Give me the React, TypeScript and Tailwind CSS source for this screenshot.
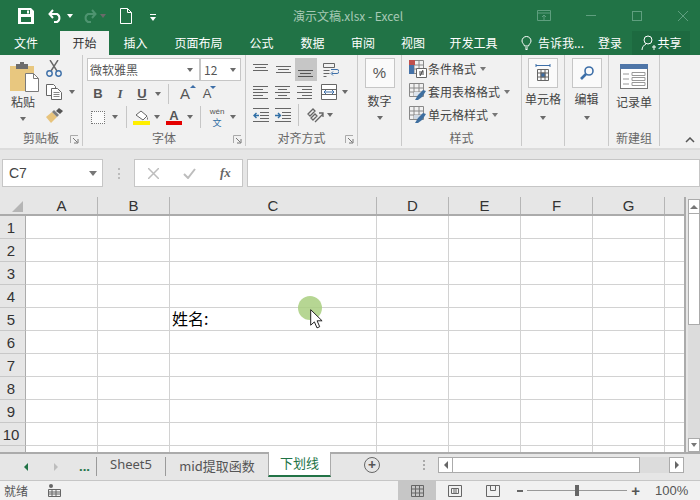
const CJK = "font-['Noto_Sans_CJK_SC','Noto_Sans',sans-serif]";

function Caret({ className = "" }: { className?: string }) {
  return <span className={`inline-block w-0 h-0 border-x-[3.5px] border-x-transparent border-t-[4px] border-t-[#6a6a6a] ${className}`} />;
}

function VSep({ className = "" }: { className?: string }) {
  return <span className={`w-px bg-[#c6c6c6] self-stretch ${className}`} />;
}

function Launcher() {
  return (
    <svg width="9" height="9" viewBox="0 0 9 9" fill="none" stroke="#777">
      <path d="M.5 8V.5H8" stroke="#aaa" />
      <path d="M3 3l4.5 4.5M8 4v4H4" />
    </svg>
  );
}

function Lines({ rows, active = false }: { rows: number[][]; active?: boolean }) {
  // rows are [x1, x2, y] in a 16x16 box
  return (
    <svg width="16" height="16" viewBox="0 0 16 16" stroke={active ? "#555" : "#666"} strokeWidth="1">
      {rows.map((r, i) => (
        <path key={i} d={`M${r[0]} ${r[2] + 0.5}H${r[1]}`} />
      ))}
    </svg>
  );
}

const alignTop = [[0, 15, 2], [2, 13, 5], [0, 15, 8]];
const alignMid = [[0, 15, 4], [2, 13, 7], [0, 15, 10]];
const alignBot = [[0, 15, 8], [2, 13, 11], [0, 15, 14]];
const alignL = [[0, 15, 2], [0, 10, 5], [0, 15, 8], [0, 10, 11], [0, 15, 14]];
const alignC = [[0, 15, 2], [3, 12, 5], [0, 15, 8], [3, 12, 11], [0, 15, 14]];
const alignR = [[0, 15, 2], [5, 15, 5], [0, 15, 8], [5, 15, 11], [0, 15, 14]];

function Clipboard() {
  return (
    <svg width="29" height="30" viewBox="0 0 29 30">
      <rect x="0" y="4" width="24" height="25" fill="#e8c77f" />
      <rect x="6" y="2" width="12" height="5" fill="#6d6d6d" />
      <rect x="10" y="0" width="4" height="3" fill="#6d6d6d" />
      <path d="M15.5 11.5h8l5 5v13h-13z" fill="#fff" stroke="#7a7a7a" />
      <path d="M23.5 11.5v5h5" fill="none" stroke="#7a7a7a" />
    </svg>
  );
}

function Scissors() {
  return (
    <svg width="16" height="17" viewBox="0 0 16 17" fill="none">
      <path d="M4 0l7 11M12 0L5 11" stroke="#666" strokeWidth="1.4" />
      <circle cx="3.5" cy="13.5" r="2.7" stroke="#3d6fa8" strokeWidth="1.4" />
      <circle cx="12.5" cy="13.5" r="2.7" stroke="#3d6fa8" strokeWidth="1.4" />
    </svg>
  );
}

function CopyIcon() {
  return (
    <svg width="16" height="16" viewBox="0 0 16 16" fill="#fff" stroke="#666">
      <path d="M.5.5h7l2 2v9h-9z" />
      <path d="M5.5 4.5h6l4 4v7h-10z" />
      <path d="M7.5 8.5h6M7.5 10.5h6M7.5 12.5h6" stroke="#888" />
    </svg>
  );
}

function Brush() {
  return (
    <svg width="17" height="15" viewBox="0 0 17 15">
      <path d="M0 9l6-5 5 5-6 6z" fill="#e7c37c" />
      <path d="M6 4l5 5 2-2-5-5z" fill="#7f7f7f" />
      <path d="M10 3l3-3 4 3-3 3z" fill="#555" />
    </svg>
  );
}

function Group({ width, label, launcher, children, className = "" }: { width: number; label?: string; launcher?: boolean; children: React.ReactNode; className?: string }) {
  return (
    <div className="flex flex-col shrink-0 border-r border-[#c9c9c9] h-[91px]" style={{ width }}>
      <div className={`h-[75px] shrink-0 ${className}`}>{children}</div>
      <div className="h-[16px] flex items-center relative text-[12px] text-[#666]">
        <span className="flex-1 text-center leading-none">{label}</span>
        {launcher && (
          <span className="absolute right-[3px] top-[5px] flex">
            <Launcher />
          </span>
        )}
      </div>
    </div>
  );
}

function StyleRow({ icon, label }: { icon: React.ReactNode; label: string }) {
  return (
    <div className="h-[23px] flex items-center gap-[1px] text-[12px] text-[#444]">
      <span className="w-[18px] flex justify-center">{icon}</span>
      <span className="leading-none">{label}</span>
      <Caret className="ml-[3px] border-t-[#777]" />
    </div>
  );
}

function TableIcon({ kind }: { kind: "cond" | "table" | "cell" }) {
  return (
    <svg width="18" height="18" viewBox="0 0 18 18" fill="none">
      <path d="M.5.5h14v13H.5zM.5 5h14M.5 9h14M5 .5v13M10 .5v13" stroke="#888" />
      {kind === "cond" && <rect x="0" y="0" width="6" height="5" fill="#c0504d" />}
      {kind === "cond" && <rect x="0" y="5" width="5" height="9" fill="#4472a8" />}
      {kind === "cond" && <path d="M7.5 8.5h10v9h-10z" fill="#fff" stroke="#666" />}
      {kind === "cond" && <path d="M10 12h5M10 14h5M14 10l-3 6" stroke="#444" />}
      {kind !== "cond" && <path d="M5 9h9v4H5z" fill={kind === "cell" ? "#cfd8e2" : "#dde4ec"} />}
      {kind !== "cond" && <path d="M6 17l3-5 5-5 3 1-4 6-4 3z" fill="#3f6f9f" />}
    </svg>
  );
}

function BoxBtn({ children }: { children: React.ReactNode }) {
  return <div className="w-[30px] h-[30px] bg-[#fafafa] border border-[#c6c6c6] flex items-center justify-center mx-auto">{children}</div>;
}

function Ribbon() {
  return (
    <div className="h-[95px] bg-[#f1f1f1] flex border-b-2 border-[#dcdcdc] text-[#444]">
      <Group width={83} label="剪贴板" launcher className="flex">
        <div className="w-[46px] pt-[7px] flex flex-col items-center">
          <div className="ml-[3px]"><Clipboard /></div>
          <span className="text-[12px] leading-none mt-[4px]">粘贴</span>
          <Caret className="mt-[9px]" />
        </div>
        <div className="pt-[5px] flex flex-col">
          <Scissors />
          <div className="flex items-center gap-[7px] mt-[7px]"><CopyIcon /><Caret /></div>
          <div className="mt-[8px]"><Brush /></div>
        </div>
      </Group>
      <Group width={163} label="字体" launcher className="pl-[4px] pt-[3px]">
        <div className="flex h-[23px] w-[154px] bg-white border border-[#c6c6c6] text-[12px] text-[#555]">
          <div className="w-[113px] border-r-2 border-[#c6c6c6] flex items-center justify-between pl-[2px] pr-[6px]">
            <span>微软雅黑</span><Caret />
          </div>
          <div className="flex-1 flex items-center justify-between pl-[3px] pr-[4px]">
            <span>12</span><Caret />
          </div>
        </div>
        <div className="flex items-center h-[20px] mt-[3px] text-[#555]">
          <span className="w-[22px] text-center text-[13px] font-bold font-['Liberation_Sans']">B</span>
          <span className="w-[22px] text-center text-[13px] italic font-bold font-['Liberation_Serif']">I</span>
          <span className="w-[22px] text-center text-[13px] font-bold underline font-['Liberation_Sans']">U</span>
          <Caret className="ml-[2px]" />
          <VSep className="ml-[7px]" />
          <span className="w-[24px] ml-[4px] text-center text-[15px] font-['Liberation_Sans'] relative">A<span className="absolute right-[1px] top-[2px] w-0 h-0 border-x-[3px] border-x-transparent border-b-[3px] border-b-[#3d6fa8]" /></span>
          <span className="w-[20px] text-center text-[13px] font-['Liberation_Sans'] relative">A<span className="absolute right-[1px] top-[2px] w-0 h-0 border-x-[3px] border-x-transparent border-t-[3px] border-t-[#3d6fa8]" /></span>
        </div>
        <div className="flex items-center h-[22px] mt-[2px]">
          <span className="ml-[4px] w-[14px] h-[13px] border border-dotted border-[#777] bg-[#fafafa]" />
          <Caret className="ml-[7px]" />
          <VSep className="ml-[8px]" />
          <div className="ml-[6px] w-[17px] flex flex-col items-center">
            <svg width="14" height="11" viewBox="0 0 14 11"><path d="M1 5l5-4 6 5-4 4z" fill="#fff" stroke="#666" /><path d="M12 6l1 3-1 1z" fill="#666" /></svg>
            <span className="w-[17px] h-[4px] bg-[#ffef00]" />
          </div>
          <Caret className="ml-[4px]" />
          <div className="ml-[6px] w-[16px] flex flex-col items-center">
            <span className="text-[13px] leading-[11px] font-bold font-['Liberation_Sans'] text-[#555]">A</span>
            <span className="w-[16px] h-[4px] bg-[#e40000]" />
          </div>
          <Caret className="ml-[5px]" />
          <VSep className="ml-[7px]" />
          <div className="ml-[8px] w-[16px] flex flex-col items-center gap-[2px]">
            <span className="text-[8px] leading-[8px] font-['Liberation_Sans'] text-[#555]">wén</span>
            <span className="text-[9px] leading-[9px] text-[#2f6ea5]">文</span>
          </div>
          <Caret className="ml-[5px]" />
        </div>
      </Group>
      <Group width={112} label="对齐方式" launcher className="pl-[7px]">
        <div className="flex items-center h-[23px] mt-[3px]">
          <span className="w-[22px] flex"><Lines rows={alignTop} /></span>
          <span className="w-[19px] flex ml-[1px]"><Lines rows={alignMid} /></span>
          <span className="w-[22px] h-[23px] bg-[#c6c6c6] flex items-center justify-center"><Lines rows={alignBot} active /></span>
          <span className="ml-[6px] flex">
            <svg width="16" height="16" viewBox="0 0 16 16" fill="none" stroke="#666"><path d="M.5 1.5h11v4H.5zM.5 8.5h6M.5 11.5h6M.5 14.5h3" /><path d="M9 11.5h5a1.5 1.5 0 000-4H8M10 9.5l-2 2 2 2" stroke="#3d6fa8" /></svg>
          </span>
        </div>
        <div className="flex items-center h-[20px] mt-[1px]">
          <span className="w-[22px] flex"><Lines rows={alignL} /></span>
          <span className="w-[22px] flex"><Lines rows={alignC} /></span>
          <span className="w-[24px] flex"><Lines rows={alignR} /></span>
          <span className="flex">
            <svg width="16" height="16" viewBox="0 0 16 16" fill="#fff" stroke="#666"><path d="M.5.5h15v15H.5zM.5 5.500h15M.5 10.500h15" /><path d="M3 8h10M5 6l-2 2 2 2M11 6l2 2-2 2" stroke="#3d6fa8" fill="none" /></svg>
          </span>
          <Caret className="ml-[5px]" />
        </div>
        <div className="flex items-center h-[22px] mt-[2px]">
          <span className="w-[22px] flex">
            <svg width="16" height="16" viewBox="0 0 16 16" fill="none" stroke="#666"><path d="M0 1.5h16M7 5.500h9M7 8.500h9M7 11.500h9M0 14.500h16" /><path d="M6 8.500H1M3.500 6l-2.500 2.500L3.500 11" stroke="#2f6ea5" strokeWidth="1.4" /></svg>
          </span>
          <span className="w-[22px] flex">
            <svg width="16" height="16" viewBox="0 0 16 16" fill="none" stroke="#666"><path d="M0 1.5h16M7 5.500h9M7 8.500h9M7 11.500h9M0 14.500h16" /><path d="M0 8.500h5M3 6l2.500 2.500L3 11" stroke="#2f6ea5" strokeWidth="1.4" /></svg>
          </span>
          <VSep className="ml-[1px]" />
          <span className="ml-[8px] text-[#555] flex">
            <svg width="17" height="17" viewBox="0 0 17 17" fill="none" stroke="#666" strokeWidth="1.3"><path d="M1 7l5-5 2 2-5 5zM4 11l4-4 2 2-4 4zM8 15l8-8M12 6h4v4" /></svg>
          </span>
          <Caret className="ml-[3px]" />
        </div>
      </Group>
      <Group width={44} className="pt-[3px] flex flex-col items-center">
        <BoxBtn><span className="text-[15px] font-['Liberation_Sans'] text-[#555]">%</span></BoxBtn>
        <span className="text-[12px] leading-none mt-[7px]">数字</span>
        <Caret className="mt-[9px]" />
      </Group>
      <Group width={120} label="样式" className="pl-[7px] pt-[2px]">
        <StyleRow icon={<TableIcon kind="cond" />} label="条件格式" />
        <StyleRow icon={<TableIcon kind="table" />} label="套用表格格式" />
        <StyleRow icon={<TableIcon kind="cell" />} label="单元格样式" />
      </Group>
      <Group width={43} className="pt-[3px] flex flex-col items-center">
        <BoxBtn>
          <svg width="16" height="18" viewBox="0 0 16 18" fill="none" stroke="#666"><path d="M1 1.500h14M1 0v3M15 0v3" stroke="#3d6fa8" /><path d="M2.500 5.500h11v11h-11zM2.500 9h11M2.500 13h11M6 5.500v11M10 5.500v11" /><rect x="6" y="9" width="4" height="4" fill="#3d6fa8" /></svg>
        </BoxBtn>
        <span className="text-[12px] leading-none mt-[5px] whitespace-nowrap">单元格</span>
        <Caret className="mt-[11px]" />
      </Group>
      <Group width={44} className="pt-[3px] flex flex-col items-center">
        <BoxBtn>
          <svg width="16" height="16" viewBox="0 0 16 16" fill="none" stroke="#3d6fa8"><circle cx="10" cy="6" r="4" strokeWidth="1.6" /><path d="M7 9l-5 5" strokeWidth="2.6" /></svg>
        </BoxBtn>
        <span className="text-[12px] leading-none mt-[5px]">编辑</span>
        <Caret className="mt-[11px]" />
      </Group>
      <Group width={51} label="新建组" className="pt-[9px] flex flex-col items-center">
        <svg width="28" height="25" viewBox="0 0 28 25" fill="#fff" stroke="#777">
          <rect x=".5" y=".5" width="27" height="24" />
          <rect x="0" y="0" width="28" height="5" fill="#4f76a8" stroke="none" />
          <path d="M3 10h6M3 15h6M3 20h6" stroke="#999" />
          <path d="M12 8.500h13v3H12zM12 13.500h13v3H12zM12 18.500h13v3H12z" stroke="#999" />
        </svg>
        <span className="text-[12px] leading-none mt-[7px]">记录单</span>
      </Group>
      <div className="flex-1 flex items-end justify-end pr-[5px] pb-[5px]">
        <svg width="10" height="6" viewBox="0 0 10 6" fill="none" stroke="#555" strokeWidth="1.5"><path d="M1 5l4-4 4 4" /></svg>
      </div>
    </div>
  );
}

function TitleBar() {
  return (
    <div className="h-[31px] flex items-center text-white relative">
      <span className="ml-[18px] flex">
        <svg width="16" height="16" viewBox="0 0 16 16" fill="#fff"><path d="M0 0h13l3 3v13H0zM3 2v4h9V2zM3 9v5h10V9z" fillRule="evenodd" /><rect x="9" y="2.500" width="2" height="3" /></svg>
      </span>
      <span className="ml-[14px] flex">
        <svg width="16" height="14" viewBox="0 0 16 14" fill="none" stroke="#fff" strokeWidth="2"><path d="M5 1L1.500 5 5 9M2 5h7a4.500 4.500 0 010 8H6" /></svg>
      </span>
      <Caret className="ml-[3px] border-t-white" />
      <span className="ml-[8px] flex">
        <svg width="16" height="14" viewBox="0 0 16 14" fill="none" stroke="#4e9470" strokeWidth="2"><path d="M11 1l3.500 4L11 9M14 5H7a4.500 4.500 0 000 8h3" /></svg>
      </span>
      <Caret className="ml-[3px] border-t-[#4e9470]" />
      <span className="ml-[14px] flex">
        <svg width="12" height="16" viewBox="0 0 12 16" fill="none" stroke="#fff"><path d="M.500.500h7l4 4v11H.500zM7.500.500v4h4" /></svg>
      </span>
      <span className="ml-[18px] flex flex-col items-center gap-[2px] mt-[3px]">
        <span className="w-[6px] h-px bg-white" />
        <Caret className="border-t-white" />
      </span>
      <span className="ml-[137px] text-[12px] text-[#a7c9b5] whitespace-nowrap">演示文稿.xlsx - Excel</span>
      <div className="ml-auto flex items-center text-[#5f9f7f]">
        <svg width="14" height="12" viewBox="0 0 14 12" fill="none" stroke="currentColor"><path d="M.500.500h13v10H.500zM.500 3h13M7 10V5M5 7l2-2 2 2" /></svg>
        <span className="ml-[35px] w-[10px] h-px bg-current" />
        <span className="ml-[36px] w-[10px] h-[10px] border border-current" />
        <svg className="ml-[36px] mr-[12px]" width="10" height="10" viewBox="0 0 10 10" stroke="currentColor"><path d="M0 0l10 10M10 0L0 10" /></svg>
      </div>
    </div>
  );
}

function TabRow() {
  const tabs = [
    { t: "插入", w: 51 },
    { t: "页面布局", w: 75 },
    { t: "公式", w: 51 },
    { t: "数据", w: 51 },
    { t: "审阅", w: 50 },
    { t: "视图", w: 50 },
    { t: "开发工具", w: 71 },
  ];
  return (
    <div className="h-[24px] flex items-center text-[12px] text-white">
      <span className="w-[60px] text-center pr-[8px]">文件</span>
      <span className="w-[49px] h-full bg-[#f1f1f1] text-[#333] flex items-center justify-center">开始</span>
      <span className="w-[1px]" />
      {tabs.map((x) => (
        <span key={x.t} className="text-center whitespace-nowrap" style={{ width: x.w }}>{x.t}</span>
      ))}
      <span className="ml-[12px] flex">
        <svg width="11" height="14" viewBox="0 0 11 14" fill="none" stroke="#fff"><path d="M3.500 10C3 8 1 7 1 5a4.500 4.500 0 019 0c0 2-2 3-2.500 5zM4 12h3M4.500 13.500h2" /></svg>
      </span>
      <span className="ml-[6px] whitespace-nowrap w-[60px]">告诉我...</span>
      <span className="whitespace-nowrap">登录</span>
      <div className="ml-[10px] w-[58px] h-full bg-[#1d6a40] flex items-center justify-center gap-[2px]">
        <svg width="15" height="16" viewBox="0 0 15 16" fill="none" stroke="#fff"><circle cx="7" cy="5" r="4" /><path d="M1 15c0-3 2-5 4-6M11 12h4M13 10v5" /></svg>
        <span>共享</span>
      </div>
    </div>
  );
}

function FormulaBar() {
  return (
    <div className="h-[47px] bg-[#e6e6e6] pt-[9px] px-[2px] flex items-start">
      <div className="w-[101px] h-[28px] bg-white border border-[#c6c6c6] flex items-center justify-between pl-[6px] pr-[5px] text-[14px] text-[#444] font-['Liberation_Sans']">
        <span>C7</span>
        <Caret className="border-t-[#777] border-x-[4px] border-t-[5px]" />
      </div>
      <div className="w-[31px] h-[28px] flex items-center justify-center">
        <span className="w-[2px] h-[11px] border-l-2 border-dotted border-[#bbb]" />
      </div>
      <div className="w-[109px] h-[28px] bg-white border border-[#c6c6c6] flex items-center text-[#bbb]">
        <svg className="ml-[13px]" width="11" height="11" viewBox="0 0 11 11" stroke="#bdbdbd" strokeWidth="1.500"><path d="M0 0l11 11M11 0L0 11" /></svg>
        <svg className="ml-[24px]" width="13" height="11" viewBox="0 0 13 11" fill="none" stroke="#bdbdbd" strokeWidth="2"><path d="M1 6l4 4 7-9" /></svg>
        <span className="ml-[24px] text-[13px] italic font-bold font-['Liberation_Serif'] text-[#666]">fx</span>
      </div>
      <div className="ml-[4px] flex-1 h-[28px] bg-white border border-[#c6c6c6] mr-[-2px]" />
    </div>
  );
}

const COLS = [
  { name: "A", w: 72 },
  { name: "B", w: 72 },
  { name: "C", w: 207 },
  { name: "D", w: 72 },
  { name: "E", w: 72 },
  { name: "F", w: 72 },
  { name: "G", w: 72 },
  { name: "", w: 19 },
];

function Sheet() {
  const rows = [1, 2, 3, 4, 5, 6, 7, 8, 9, 10];
  return (
    <div className="flex h-[255px] bg-[#e6e6e6]">
      <div className="w-[684px] shrink-0 flex flex-col relative border-r-2 border-[#ababab] box-content overflow-hidden">
        <div className="flex h-[17px] shrink-0 border-b-2 border-[#ababab] box-content text-[15px] font-['Liberation_Sans'] text-[#333]">
          <div className="w-[26px] flex items-end justify-end pr-[3px] pb-[2px]">
            <span className="w-0 h-0 border-l-[11px] border-l-transparent border-b-[11px] border-b-[#b5b5b5]" />
          </div>
          {COLS.map((c) => (
            <div key={c.name} className="flex items-center justify-center pt-[2px] border-r border-[#b5b5b5] last:border-r-0" style={{ width: c.w }}>{c.name}</div>
          ))}
        </div>
        <div className="flex-1 overflow-hidden">
          {[...rows, 11].map((r) => (
            <div key={r} className="flex h-[23px]">
              <div className="w-[26px] border-r border-b border-[#ababab] border-b-[#c8c8c8] text-[15px] font-['Liberation_Sans'] text-[#333] flex items-center justify-center pr-[3px] pt-[3px]">{r <= 10 ? r : ""}</div>
              {COLS.map((c) => (
                <div key={c.name} className={`bg-white border-b border-r border-[#d2d2d2] last:border-r-0 text-[16px] leading-[20px] text-black pl-[2px] whitespace-nowrap ${CJK}`} style={{ width: c.w }}>
                  {r === 5 && c.name === "C" ? "姓名:" : ""}
                </div>
              ))}
            </div>
          ))}
        </div>
        {/* recorded click highlight and pointer over the grid */}
        <span className="absolute left-[298px] top-[99px] w-[24px] h-[24px] rounded-full bg-[#a9cf80]/85" />
        <svg className="absolute left-[310px] top-[112px]" width="13" height="20" viewBox="0 0 13 20">
          <path d="M.7.700v15.500l3.700-3.300 2.600 6 2.700-1.200-2.600-5.900h5z" fill="#fff" stroke="#222" strokeWidth="1" />
        </svg>
      </div>
      <div className="w-[12px] ml-[2px] flex flex-col">
        <div className="mt-[2px] h-[15px] bg-white border border-[#ababab] flex items-center justify-center">
          <span className="w-0 h-0 border-x-[4px] border-x-transparent border-b-[4px] border-b-[#777]" />
        </div>
        <div className="h-[111px] bg-white border border-t-0 border-[#ababab]" />
        <div className="flex-1 bg-[#dcdcdc]" />
        <div className="h-[14px] bg-white border border-[#ababab] flex items-center justify-center">
          <Caret className="border-t-[#777]" />
        </div>
      </div>
    </div>
  );
}

function TabsBar() {
  return (
    <div className="h-[28px] bg-[#e6e6e6] flex border-t-2 border-[#ababab] text-[13px] font-['Noto_Sans',sans-serif] text-[#555]">
      <div className="w-[97px] flex items-center border-r border-[#9a9a9a] my-[3px] mb-[4px]">
        <span className="ml-[24px] w-0 h-0 border-y-[4px] border-y-transparent border-r-[4px] border-r-[#217346]" />
        <span className="ml-[26px] w-0 h-0 border-y-[4px] border-y-transparent border-l-[4px] border-l-[#bdbdbd]" />
        <span className="ml-[21px] font-bold text-[#217346] leading-none">...</span>
      </div>
      <div className="w-[69px] flex items-center justify-center pb-[3px] border-r border-[#9a9a9a] my-[3px] mb-[4px]">Sheet5</div>
      <div className={`w-[102px] flex items-center justify-center pb-[3px] ${CJK}`}>mid提取函数</div>
      <div className={`w-[63px] h-[25px] mt-[-2px] pb-[1px] bg-white border-x border-[#ababab] border-b-2 border-b-[#217346] flex items-center justify-center text-[#217346] ${CJK}`}>下划线</div>
      <div className="w-[33px]" />
      <span className="mt-[3px] w-[16px] h-[16px] rounded-full border border-[#666] text-[#555] flex items-center justify-center text-[14px] leading-none font-bold">+</span>
      <span className="ml-[43px] mt-[6px] w-[2px] h-[10px] border-l-2 border-dotted border-[#aaa]" />
      <div className="ml-[13px] mt-[3px] h-[16px] w-[246px] flex">
        <div className="w-[15px] bg-white border border-[#ababab] flex items-center justify-center">
          <span className="w-0 h-0 border-y-[4px] border-y-transparent border-r-[4px] border-r-[#666]" />
        </div>
        <div className="w-[187px] bg-white border border-l-0 border-[#ababab]" />
        <div className="flex-1 bg-[#dcdcdc]" />
        <div className="w-[15px] bg-white border border-[#ababab] flex items-center justify-center">
          <span className="w-0 h-0 border-y-[4px] border-y-transparent border-l-[4px] border-l-[#666]" />
        </div>
      </div>
    </div>
  );
}

function StatusBar() {
  return (
    <div className="h-[20px] bg-[#f1f1f1] border-t border-[#c6c6c6] flex items-center text-[12px] text-[#555]">
      <span className="ml-[4px] w-[44px]">就绪</span>
      <svg width="13" height="13" viewBox="0 0 13 13" fill="none" stroke="#666"><circle cx="3" cy="2" r="2" fill="#666" stroke="none" /><path d="M.500 5.500h12v7H.500zM.500 8h12M.500 10h12M4 5.500v7M8 5.500v7" /></svg>
      <div className="ml-auto flex items-center h-full">
        <div className="w-[38px] h-full bg-[#c6c6c6] flex items-center justify-center">
          <svg width="13" height="12" viewBox="0 0 13 12" fill="none" stroke="#666"><path d="M.500.500h12v11H.500zM.500 4h12M.500 8h12M4.500.500v11M8.500.500v11" /></svg>
        </div>
        <div className="w-[38px] flex justify-center">
          <svg width="14" height="12" viewBox="0 0 14 12" fill="none" stroke="#666"><path d="M.500.500h13v11H.500zM3.500 3.500h7v5h-7zM5 5h4M5 7h4" /></svg>
        </div>
        <div className="w-[38px] flex justify-center">
          <svg width="14" height="12" viewBox="0 0 14 12" fill="none" stroke="#666"><path d="M.500.500h13v11H.500zM4.500.500v5h5v-5" /></svg>
        </div>
        <span className="ml-[5px] w-[6px] h-[2px] bg-[#666]" />
        <div className="ml-[4px] w-[100px] h-px bg-[#999] flex justify-center items-center">
          <span className="w-[4px] h-[11px] bg-[#666]" />
        </div>
        <span className="ml-[4px] text-[15px] font-bold leading-none font-['Liberation_Sans']">+</span>
        <span className="ml-[15px] mr-[15px] w-[30px] text-[13px] font-['Liberation_Sans']">100%</span>
      </div>
    </div>
  );
}

export default function App() {
  return (
    <div className={`w-[700px] h-[500px] overflow-hidden flex flex-col ${CJK}`}>
      <div className="bg-[#217346] shrink-0">
        <TitleBar />
        <TabRow />
      </div>
      <Ribbon />
      <FormulaBar />
      <Sheet />
      <TabsBar />
      <StatusBar />
    </div>
  );
}
